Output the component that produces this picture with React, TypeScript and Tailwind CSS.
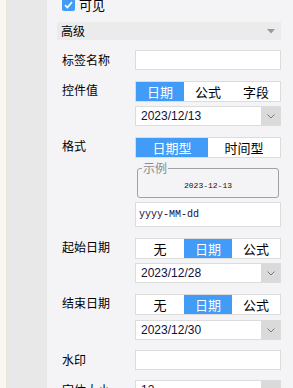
const cjk = { fontFamily: '"Noto Sans CJK SC", "Liberation Sans", sans-serif' }

function Chevron() {
  return (
    <svg width="8" height="5" viewBox="0 0 8 5" fill="none">
      <path d="M0.5 0.5 L4 4 L7.5 0.5" stroke="#7a7a7a" strokeWidth="1" />
    </svg>
  )
}

function Segmented({ items, active }: { items: string[]; active: number }) {
  return (
    <div className="flex h-[21px] border border-[#dcdcdc] bg-white">
      {items.map((t, i) => (
        <div
          key={t}
          className={`flex-1 flex items-center justify-center text-[13px] leading-none ${
            i === active ? 'bg-[#419bf7] text-white' : 'text-black'
          }`}
        >
          {t}
        </div>
      ))}
    </div>
  )
}

function DateSelect({ value }: { value: string }) {
  return (
    <div className="flex h-[20px] border border-[#dcdcdc] bg-white">
      <div
        className="flex-1 flex items-center pl-[5px] text-[12px] text-[#10103a]"
        style={{ fontFamily: '"Liberation Sans", sans-serif' }}
      >
        {value}
      </div>
      <div className="w-[19px] bg-[#dadada] flex items-center justify-center">
        <Chevron />
      </div>
    </div>
  )
}

function Row({ label, top, children }: { label: string; top?: boolean; children: React.ReactNode }) {
  return (
    <div className="flex">
      <div className={`w-[78px] pl-[5px] text-[12px] text-black ${top ? 'leading-[16px] pt-[1px]' : 'leading-[20px]'}`}>
        {label}
      </div>
      <div className="flex-1 flex flex-col">{children}</div>
    </div>
  )
}

export default function App() {
  return (
    <div className="flex h-[388px] w-[293px] overflow-hidden" style={cjk}>
      <div className="w-[7px] bg-[#f8f7f2] border-r border-[#ede6d4]" />
      <div className="w-[40px] bg-[#e8e8e8]" />
      <div className="flex-1 bg-[#f4f4f6] pl-[10px] pr-[12px] flex flex-col">
        {/* visible checkbox */}
        <div className="flex items-center gap-[4px] pl-[5px] h-[14px] mt-[-2px]">
          <div className="w-[13px] h-[13px] rounded-[2px] bg-[#419bf7] flex items-center justify-center">
            <svg width="9" height="8" viewBox="0 0 9 8" fill="none">
              <path d="M1 4.2 L3.4 6.5 L8 1" stroke="white" strokeWidth="1.6" />
            </svg>
          </div>
          <span className="text-[13px] leading-none text-black">可见</span>
        </div>

        {/* advanced bar */}
        <div className="mt-[11px] h-[20px] bg-[#ebebeb] flex items-center justify-between pl-[4px] pr-[6px]">
          <span className="text-[12px] text-black">高级</span>
          <svg width="8" height="5" viewBox="0 0 8 5">
            <path d="M0 0 H8 L4 4.5 Z" fill="#9a9a9a" />
          </svg>
        </div>

        <div className="mt-[10px]">
          <Row label="标签名称">
            <div className="h-[20px] border border-[#dcdcdc] bg-white" />
          </Row>
        </div>

        <div className="mt-[11px]">
          <Row label="控件值" top>
            <Segmented items={['日期', '公式', '字段']} active={0} />
            <div className="mt-[4px]">
              <DateSelect value="2023/12/13" />
            </div>
          </Row>
        </div>

        <div className="mt-[11px]">
          <Row label="格式" top>
            <Segmented items={['日期型', '时间型']} active={0} />
            <fieldset className="mt-[4px] mx-[2px] border border-[#a0a0a0] rounded-[3px] px-0">
              <legend className="ml-[4px] px-[1px] text-[12px] leading-[12px] text-[#8a8a8a]">示例</legend>
              <div
                className="h-[23px] flex items-center justify-center text-[8px] text-[#111]"
                style={{ fontFamily: '"Liberation Mono", monospace' }}
              >
                2023-12-13
              </div>
            </fieldset>
            <div
              className="mt-[4px] h-[25px] border border-[#dcdcdc] bg-white flex items-center pl-[3px] text-[10px] text-[#10103a]"
              style={{ fontFamily: '"Liberation Mono", monospace' }}
            >
              yyyy-MM-dd
            </div>
          </Row>
        </div>

        <div className="mt-[11px]">
          <Row label="起始日期" top>
            <Segmented items={['无', '日期', '公式']} active={1} />
            <div className="mt-[4px]">
              <DateSelect value="2023/12/28" />
            </div>
          </Row>
        </div>

        <div className="mt-[11px]">
          <Row label="结束日期" top>
            <Segmented items={['无', '日期', '公式']} active={1} />
            <div className="mt-[5px]">
              <DateSelect value="2023/12/30" />
            </div>
          </Row>
        </div>

        <div className="mt-[10px]">
          <Row label="水印">
            <div className="h-[20px] border border-[#dcdcdc] bg-white" />
          </Row>
        </div>

        <div className="mt-[10px]">
          <Row label="字体大小">
            <DateSelect value="12" />
          </Row>
        </div>
      </div>
    </div>
  )
}
